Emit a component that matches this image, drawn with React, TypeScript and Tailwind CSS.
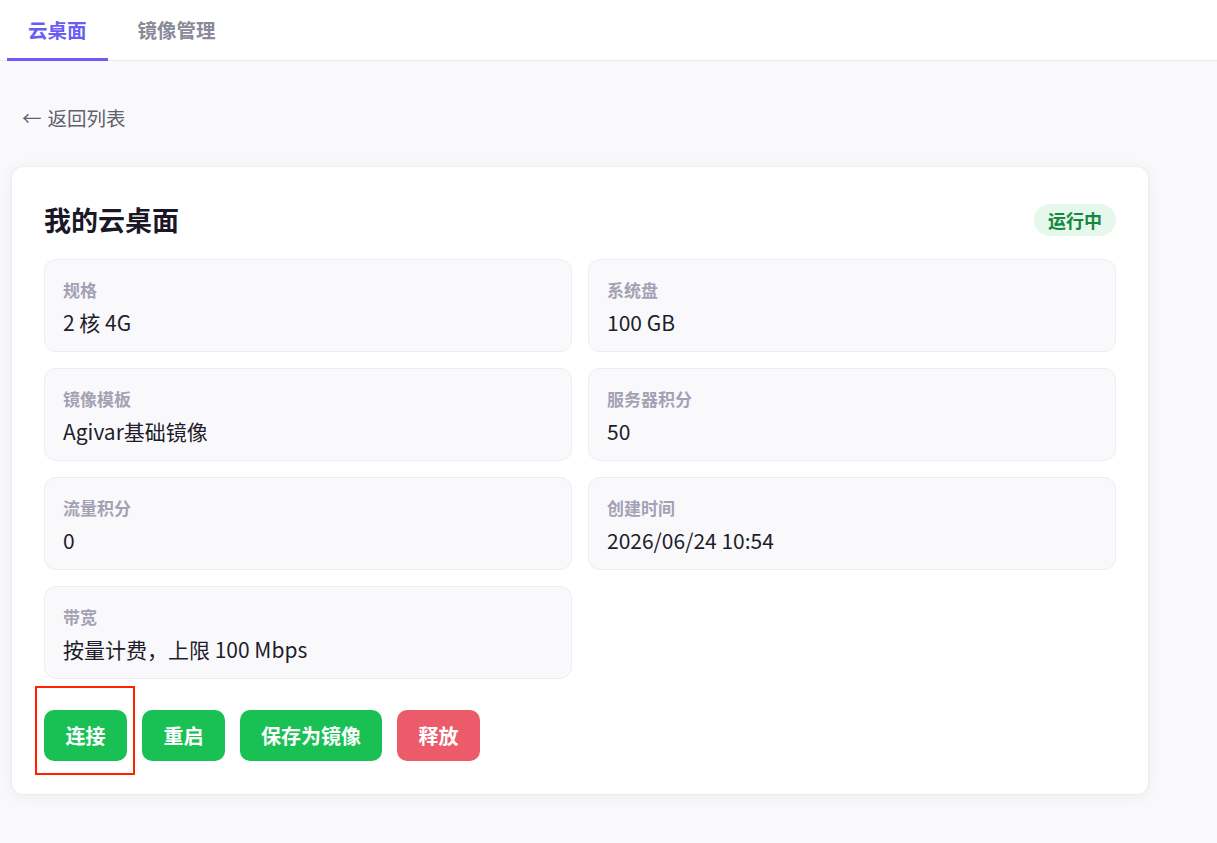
import React, { useState } from 'react';

const specs = [
  { label: '规格', value: '2 核 4G' },
  { label: '系统盘', value: '100 GB' },
  { label: '镜像模板', value: 'Agivar基础镜像' },
  { label: '服务器积分', value: '50' },
  { label: '流量积分', value: '0' },
  { label: '创建时间', value: '2026/06/24 10:54' },
  { label: '带宽', value: '按量计费，上限 100 Mbps' },
];

const tabs = [
  { key: 'desktop', name: '云桌面' },
  { key: 'image', name: '镜像管理' },
];

export default function App() {
  const [tab, setTab] = useState('desktop');

  return (
    <div className="min-h-[843px] bg-[#f9f9fb] font-['Noto_Sans_CJK_SC','Noto_Sans',sans-serif] text-[#1f1d2b]">
      {/* 顶部标签 */}
      <div className="flex h-[61px] items-stretch gap-[9px] border-b border-[#e8e8ee] bg-white px-[7px]">
        {tabs.map((t) => (
          <button
            key={t.key}
            onClick={() => setTab(t.key)}
            className={`relative px-[21px] text-[19.5px] font-bold ${tab === t.key ? 'text-[#6c5cf5]' : 'text-[#8a8a99]'}`}
          >
            {t.name}
            {tab === t.key && <span className="absolute bottom-[-1px] left-0 h-[3px] w-full bg-[#6c5cf5]" />}
          </button>
        ))}
      </div>

      <div className="px-[11px] pt-[42px]">
        <button className="ml-[11px] flex items-center gap-[6px] text-[19.5px] leading-[30px] text-[#5f5f6e]">
          <span>←</span>
          <span>返回列表</span>
        </button>

        <div className="mt-[33px] w-[1138px] rounded-[12px] border border-[#ececf2] bg-white px-[32px] pt-[35px] pb-[33px] shadow-[0_2px_14px_rgba(30,30,60,0.05)]">
          <div className="flex h-[36px] items-center justify-between">
            <h1 className="text-[27px] font-bold leading-[36px] text-[#1a1827]">我的云桌面</h1>
            <span className="flex h-[32px] items-center rounded-full bg-[#e6f7ec] px-[14px] text-[18px] font-bold text-[#17873f]">
              运行中
            </span>
          </div>

          <div className="mt-[21px] grid grid-cols-2 gap-4">
            {specs.map((s) => (
              <div key={s.label} className="h-[93px] rounded-[12px] border border-[#ececf2] bg-[#f9f9fb] px-[18px] pt-[18px]">
                <div className="text-[17px] font-bold leading-[24px] text-[#a3a2b5]">{s.label}</div>
                <div className="mt-[5px] text-[21px] leading-[30px] text-[#1f1d2b]">{s.value}</div>
              </div>
            ))}
          </div>

          <div className="relative mt-[31px] flex gap-[15px]">
            <button className="h-[51px] w-[83px] rounded-[10px] bg-[#19c155] text-[20px] font-bold text-white">连接</button>
            <button className="h-[51px] w-[83px] rounded-[10px] bg-[#19c155] text-[20px] font-bold text-white">重启</button>
            <button className="h-[51px] w-[142px] rounded-[10px] bg-[#19c155] text-[20px] font-bold text-white">保存为镜像</button>
            <button className="h-[51px] w-[83px] rounded-[10px] bg-[#ec5b6a] text-[20px] font-bold text-white">释放</button>
            <div className="pointer-events-none absolute left-[-9px] top-[-24px] h-[89px] w-[100px] border-2 border-[#ff2200]" />
          </div>
        </div>
      </div>
    </div>
  );
}
